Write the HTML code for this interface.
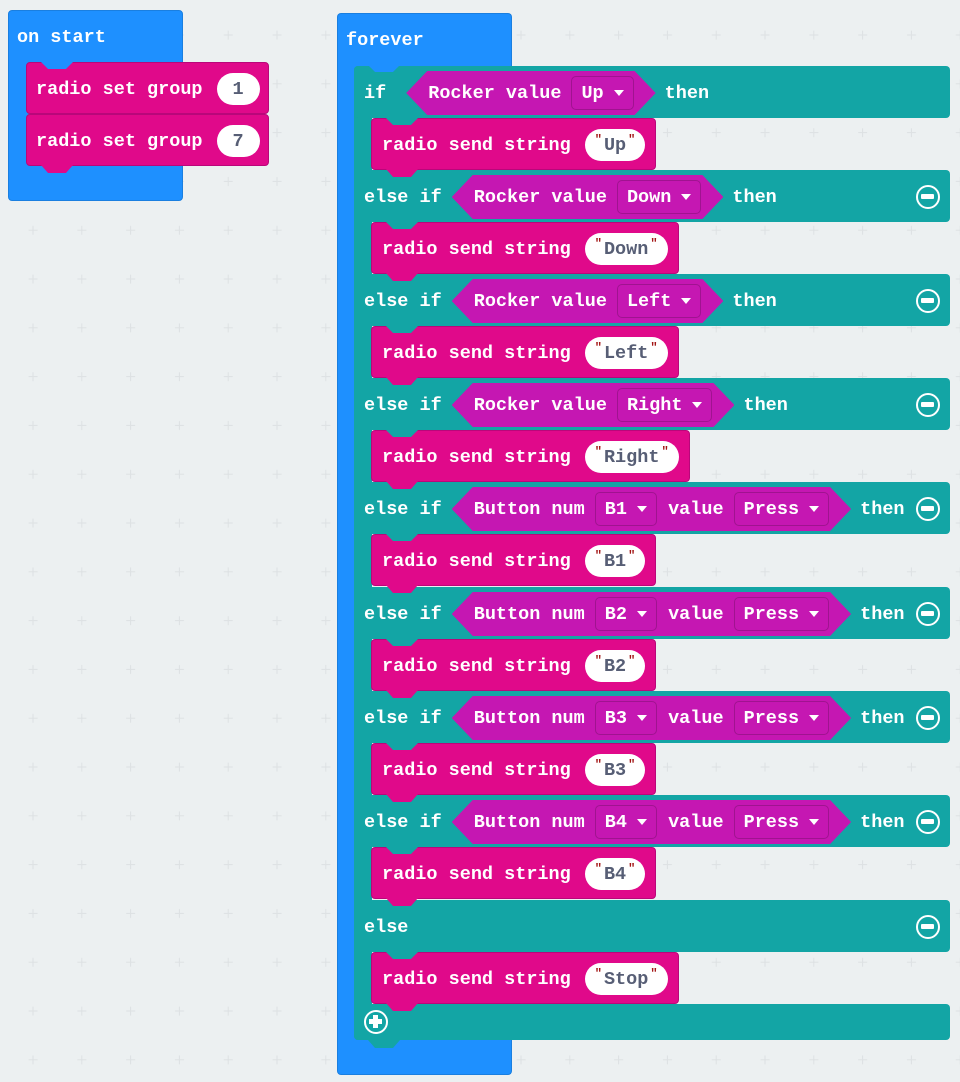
<!DOCTYPE html>
<html><head><meta charset="utf-8"><style>
*{margin:0;padding:0;box-sizing:border-box}
body{width:960px;height:1082px;background:#ecf0f1;position:relative;overflow:hidden;font-family:"Liberation Mono",monospace;font-weight:bold;font-size:18.5px;color:#fff}
.a{position:absolute}
.blue{background:#1e90ff;border:1px solid #1a7fe0;border-radius:4px}
.row{position:absolute;left:354px;width:596px;height:52px;background:#13a5a5;border-radius:0 4px 4px 0;display:flex;align-items:center;padding-left:10px;padding-top:2px;white-space:pre}
.stmt{position:absolute;left:371px;height:52px;background:#e0098a;border:1px solid #b9077a;border-radius:4px;display:flex;align-items:center;padding:2px 10px 0 10px;white-space:pre}
.stmt2{position:absolute;left:26px;height:52px;width:243px;background:#e0098a;border:1px solid #b9077a;border-radius:4px;display:flex;align-items:center;padding-left:9px;padding-top:2px;white-space:pre}
.notch{position:absolute;top:-1px;left:14px;width:32px;height:7px;clip-path:polygon(0 0,100% 0,78% 100%,22% 100%)}
.tab{position:absolute;bottom:-8px;left:14px;width:32px;height:8px;background:#e0098a;clip-path:polygon(0 0,100% 0,78% 100%,22% 100%)}
.hex{height:44px;background:#c517b2;display:flex;align-items:center;clip-path:polygon(0 50%,21px 0,calc(100% - 21px) 0,100% 50%,calc(100% - 21px) 100%,21px 100%);padding:0 22px;margin:0 9px 0 10px}
.dd{height:34px;border:1px solid #a01390;border-radius:5px;display:flex;align-items:center;padding:0 9px;margin-left:10px}
.dd b{display:inline-block;width:0;height:0;border-left:5px solid transparent;border-right:5px solid transparent;border-top:6px solid #fff;margin-left:10px}
.pill{height:32px;background:#fff;border-radius:16px;color:#575e75;display:flex;align-items:center;padding:0 8px;margin-left:14px}
.pill i{font-style:normal;color:#a31515;font-size:12px;margin:-10px 2px 0}
.num{height:32px;width:43px;background:#fff;border-radius:16px;color:#575e75;display:flex;align-items:center;justify-content:center;margin-left:14px}
.minus{position:absolute;right:10px;top:15px;width:24px;height:24px;border:2.5px solid #fff;border-radius:50%}
.minus:after{content:"";position:absolute;left:3px;top:7px;width:13px;height:5px;background:#fff;border-radius:1px}
</style></head><body>
<svg class="a" style="left:0;top:0" width="960" height="1082"><defs><pattern id="p" x="8.6" y="10.6" width="48.8" height="48.8" patternUnits="userSpaceOnUse"><path d="M24.4 20v9M20 24.4h9" stroke="#dde1e3" stroke-width="1"/></pattern></defs><rect width="960" height="1082" fill="url(#p)"/></svg>

<div class="a blue" style="left:8px;top:10px;width:175px;height:191px"></div>
<div class="a" style="left:17px;top:27px;white-space:pre">on start</div>
<div class="stmt2" style="top:62px"><div class="notch" style="background:#1e90ff"></div>radio set group<div class="num">1</div></div>
<div class="stmt2" style="top:114px"><div class="tab"></div>radio set group<div class="num">7</div></div>

<div class="a blue" style="left:337px;top:13px;width:175px;height:62px;border-bottom:none;border-radius:4px 4px 0 0"></div>
<div class="a" style="left:337px;top:60px;width:18px;height:1000px;background:#1e90ff;border-left:1px solid #1a7fe0"></div>
<div class="a blue" style="left:337px;top:1030px;width:175px;height:45px;border-top:none;border-radius:0 0 4px 4px"></div>
<div class="a" style="left:346px;top:30px;white-space:pre">forever</div>

<div class="a" style="left:354px;top:66px;width:18px;height:974px;background:#13a5a5;border-radius:4px 0 0 4px"></div>

<div class="row" style="top:66px;border-radius:4px">if<div class="hex" style="margin-left:20px">Rocker value<div class="dd">Up<b></b></div></div>then<div class="notch" style="background:#1e90ff;left:14px"></div></div>
<div class="row" style="top:170px">else if<div class="hex">Rocker value<div class="dd">Down<b></b></div></div>then<div class="minus"></div></div>
<div class="row" style="top:274px">else if<div class="hex">Rocker value<div class="dd">Left<b></b></div></div>then<div class="minus"></div></div>
<div class="row" style="top:378px">else if<div class="hex">Rocker value<div class="dd">Right<b></b></div></div>then<div class="minus"></div></div>
<div class="row" style="top:482px">else if<div class="hex">Button num<div class="dd">B1<b></b></div> value<div class="dd">Press<b></b></div></div>then<div class="minus"></div></div>
<div class="row" style="top:587px">else if<div class="hex">Button num<div class="dd">B2<b></b></div> value<div class="dd">Press<b></b></div></div>then<div class="minus"></div></div>
<div class="row" style="top:691px">else if<div class="hex">Button num<div class="dd">B3<b></b></div> value<div class="dd">Press<b></b></div></div>then<div class="minus"></div></div>
<div class="row" style="top:795px">else if<div class="hex">Button num<div class="dd">B4<b></b></div> value<div class="dd">Press<b></b></div></div>then<div class="minus"></div></div>
<div class="row" style="top:900px">else<div class="minus"></div></div>
<div class="row" style="top:1004px;height:36px;border-radius:0 4px 4px 4px"><div style="position:absolute;left:10px;top:6px;width:24px;height:24px;border:2.5px solid #fff;border-radius:50%"><div style="position:absolute;left:3px;top:7px;width:13px;height:5px;background:#fff"></div><div style="position:absolute;left:7px;top:3px;width:5px;height:13px;background:#fff"></div></div></div>
<div class="a" style="left:368px;top:1040px;width:32px;height:8px;background:#13a5a5;clip-path:polygon(0 0,100% 0,78% 100%,22% 100%)"></div>

<div class="stmt" style="top:118px"><div class="notch" style="background:#13a5a5"></div><div class="tab"></div>radio send string<div class="pill"><i>"</i>Up<i>"</i></div></div>
<div class="stmt" style="top:222px"><div class="notch" style="background:#13a5a5"></div><div class="tab"></div>radio send string<div class="pill"><i>"</i>Down<i>"</i></div></div>
<div class="stmt" style="top:326px"><div class="notch" style="background:#13a5a5"></div><div class="tab"></div>radio send string<div class="pill"><i>"</i>Left<i>"</i></div></div>
<div class="stmt" style="top:430px"><div class="notch" style="background:#13a5a5"></div><div class="tab"></div>radio send string<div class="pill"><i>"</i>Right<i>"</i></div></div>
<div class="stmt" style="top:534px"><div class="notch" style="background:#13a5a5"></div><div class="tab"></div>radio send string<div class="pill"><i>"</i>B1<i>"</i></div></div>
<div class="stmt" style="top:639px"><div class="notch" style="background:#13a5a5"></div><div class="tab"></div>radio send string<div class="pill"><i>"</i>B2<i>"</i></div></div>
<div class="stmt" style="top:743px"><div class="notch" style="background:#13a5a5"></div><div class="tab"></div>radio send string<div class="pill"><i>"</i>B3<i>"</i></div></div>
<div class="stmt" style="top:847px"><div class="notch" style="background:#13a5a5"></div><div class="tab"></div>radio send string<div class="pill"><i>"</i>B4<i>"</i></div></div>
<div class="stmt" style="top:952px"><div class="notch" style="background:#13a5a5"></div><div class="tab"></div>radio send string<div class="pill"><i>"</i>Stop<i>"</i></div></div>
</body></html>
